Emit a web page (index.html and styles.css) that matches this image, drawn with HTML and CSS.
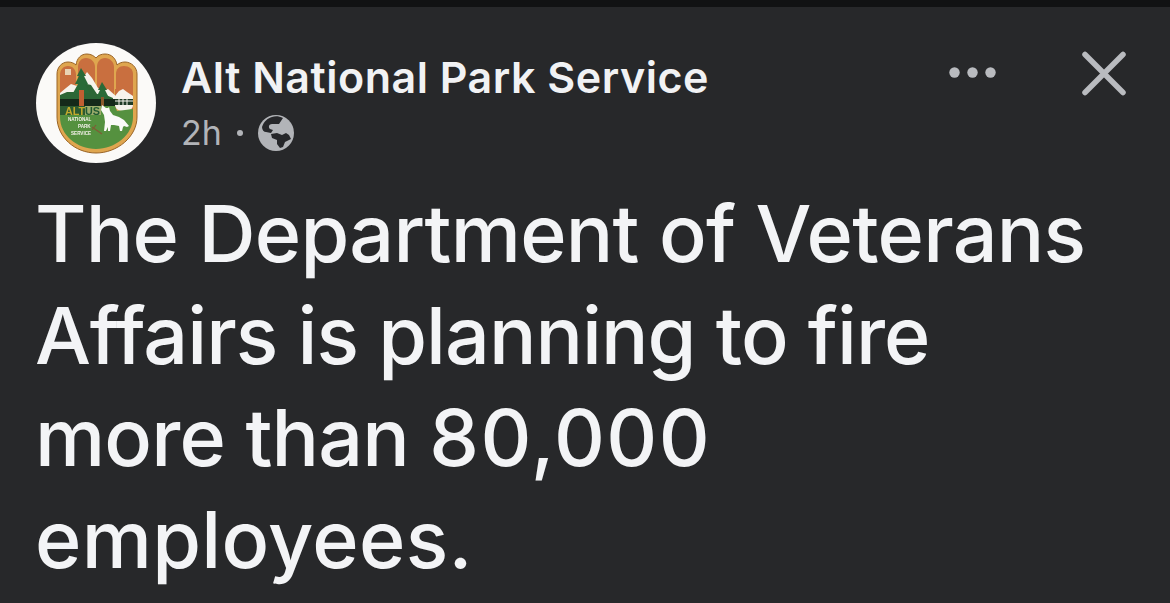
FILE: index.html
```html
<!DOCTYPE html>
<html lang="en">
<head>
<meta charset="utf-8">
<title>Alt National Park Service</title>
<link rel="stylesheet" href="styles.css">
</head>
<body>
<div class="topbar"></div>
<main class="post">
  <header class="head">
    <svg class="avatar" viewBox="0 0 120 120" aria-hidden="true">
      <circle cx="60" cy="60" r="60" fill="#fbfaf8"/>
      <!-- gold outline of the hand shield -->
      <path d="M21 74V31c0-7 5-12 11-12 3 0 6 1 8 3 1-7 5-11 11-11 4 0 7 2 9 4 2-3 6-4 9-4 7 0 11 5 12 11 2-2 5-3 8-3 6 0 12 5 12 12v43c0 20-20 36-41 36S21 94 21 74z" fill="#dfa64f" stroke="#9a6426" stroke-width="1"/>
      <!-- orange fingers -->
      <path d="M24 58V32c0-5 3-9 8-9s8 4 8 9v26z" fill="#c96f3f"/>
      <path d="M42 58V24c0-5 3-9 8-9s9 4 9 9v34z" fill="#c96f3f"/>
      <path d="M61 58V24c0-5 3-9 8-9s9 4 9 9v34z" fill="#c96f3f"/>
      <path d="M80 58V31c0-5 3-8 8-8s9 3 9 8v27z" fill="#c96f3f"/>
      <!-- snow mountains -->
      <path d="M24 50l6-5 5-4 6 2 6-8 4-6 5 6 6 10 5 3 5-2 9 8v6H24z" fill="#f6f3ec"/>
      <path d="M24 52l7-3 9 0 7-9 8 2 6 9 9 1 7 3v8H24z" fill="#2c6636"/>
      <path d="M24 56h56v9H24z" fill="#15291a"/>
      <!-- large tree -->
      <path d="M45 25l-4 8h2l-4 8h3l-5 9h17l-5-9h3l-4-8h2z" fill="#2a6a37"/>
      <path d="M43 47h5v16h-5z" fill="#c05f32"/>
      <!-- small tree -->
      <path d="M66 39l-4 8h2l-4 8h13l-4-8h2z" fill="#2a6a37"/>
      <path d="M65 54h3v10h-3z" fill="#8a5a2c"/>
      <!-- right badge with fence -->
      <path d="M79 46h18v20H79z" fill="#c96f3f"/>
      <path d="M79 53l4-5 4-2 4 3 6 4v3H79z" fill="#f6f3ec"/>
      <path d="M79 56h18v6H79z" fill="#1f3a25"/>
      <path d="M79 58h18M83 56v6M87 56v6M91 56v6" stroke="#f6f3ec" stroke-width="1"/>
      <path d="M79 62h18c0 4-4 6-9 6s-9-2-9-6z" fill="#f6f3ec"/>
      <!-- lower green field -->
      <path d="M24 63h55l2 5 16-2v8c0 18-18 32-37 32S24 92 24 74z" fill="#55913f"/>
      <path d="M24 63h25v9H24z" fill="#2d5a30"/>
      <path d="M49 63h16v9H49z" fill="#9dac6b"/>
      <path d="M56 84l10 7M60 82l-4 5" stroke="#7f5d34" stroke-width="1.2" fill="none"/>
      <text class="logo-alt" x="29" y="71.5">ALT</text>
      <text class="logo-us" x="49" y="71.5">US</text>
      <text class="logo-small" x="32" y="78">NATIONAL</text>
      <text class="logo-small" x="42" y="84.5">PARK</text>
      <text class="logo-small" x="35" y="91.5">SERVICE</text>
      <!-- wolf -->
      <path d="M66 62l4 3 2 0 1-1 1 4 3 4 6 2 5 3 5 6-2 1-3-1-1 1-1 4-2 0-1-5-5-1-3 0-1 6h-2l0-4-2 4h-2l1-9-1-7-3-5z" fill="#fbfaf8"/>
      <path d="M29 26h6v6h-6z" fill="#e9d3b4"/>
    </svg>
    <div class="meta">
      <div class="name">Alt National Park Service</div>
      <div class="sub">
        <span>2h</span>
        <span class="dot"></span>
        <svg class="globe" viewBox="0 0 36 36" aria-hidden="true">
          <circle cx="18" cy="18" r="18" fill="#b2b4b8"/>
          <path d="M14 2C10 3 6 6 4 12c0 3 2 5 4 5l5 1 2-3-3-1c-2-2-1-5 2-5h7l4-6c-4-2-8-2-11-1z" fill="#26272a"/>
          <path d="M13 19l6-1 5 2 4-2 3 2 2 4-6 3-2 5-3 1-3-4v-4l-5-2z" fill="#26272a"/>
        </svg>
      </div>
    </div>
    <div class="actions">
      <svg class="more" viewBox="0 0 47 11" aria-hidden="true">
        <circle cx="5.5" cy="5.5" r="5.2" fill="#b9bbbf"/>
        <circle cx="23.5" cy="5.5" r="5.2" fill="#b9bbbf"/>
        <circle cx="41.5" cy="5.5" r="5.2" fill="#b9bbbf"/>
      </svg>
      <svg class="close" viewBox="0 0 45 45" aria-hidden="true">
        <path d="M4 3.5l38 38M42 3.5L4 41.5" stroke="#b9bbbf" stroke-width="5.5" stroke-linecap="round"/>
      </svg>
    </div>
  </header>
  <p class="message">
    <span class="line line-1">The Department of Veterans</span>
    <span class="line line-2">Affairs is planning to fire</span>
    <span class="line line-3">more than <span class="figure">80,000</span></span>
    <span class="line line-4">employees.</span>
  </p>
</main>
</body>
</html>
```
FILE: styles.css
```css
* { box-sizing: border-box; }
html, body { margin: 0; height: 100%; }
body {
  background: #27282a;
  font-family: Inter, "Liberation Sans", sans-serif;
  overflow: hidden;
}
.topbar { height: 7px; background: #111213; }
.post { padding: 36px 44px 0 36px; }
.head { display: flex; align-items: flex-start; }
.avatar { width: 120px; height: 120px; flex: none; filter: blur(0.4px); }
.meta { margin-left: 25px; flex: 1; padding-top: 8px; }
.name { font-size: 43px; font-weight: 600; line-height: 52px; color: #f1f2f4; letter-spacing: 0.5px; }
.sub { display: flex; align-items: center; margin-top: 12px; color: #b2b4b8; font-size: 34px; line-height: 36px; }
.dot { width: 6px; height: 6px; border-radius: 50%; background: #b2b4b8; margin: 0 15px 0 15px; }
.globe { width: 36px; height: 36px; }
.actions { display: flex; align-items: flex-start; padding-top: 8px; }
.more { width: 47px; height: 11px; margin-top: 16px; margin-right: 85px; }
.close { width: 45px; height: 45px; }
.message {
  margin: 19px 0 0 -1px;
  font-size: 79px;
  font-weight: 500;
  line-height: 102px;
  color: #f3f4f6;
}
.line { display: block; }
.line-1 { letter-spacing: -0.75px; }
.line-2 { letter-spacing: -0.95px; }
.line-3 { letter-spacing: -0.8px; }
.line-4 { letter-spacing: 0.3px; }
.figure { letter-spacing: 1.4px; }
.logo-alt { font: 700 10.8px "Liberation Sans", sans-serif; fill: #c2a92c; }
.logo-us { font: 700 10.8px "Liberation Sans", sans-serif; fill: #1f5a32; }
.logo-small { font: 700 4.6px "Liberation Sans", sans-serif; fill: #f4f1ea; }
```
